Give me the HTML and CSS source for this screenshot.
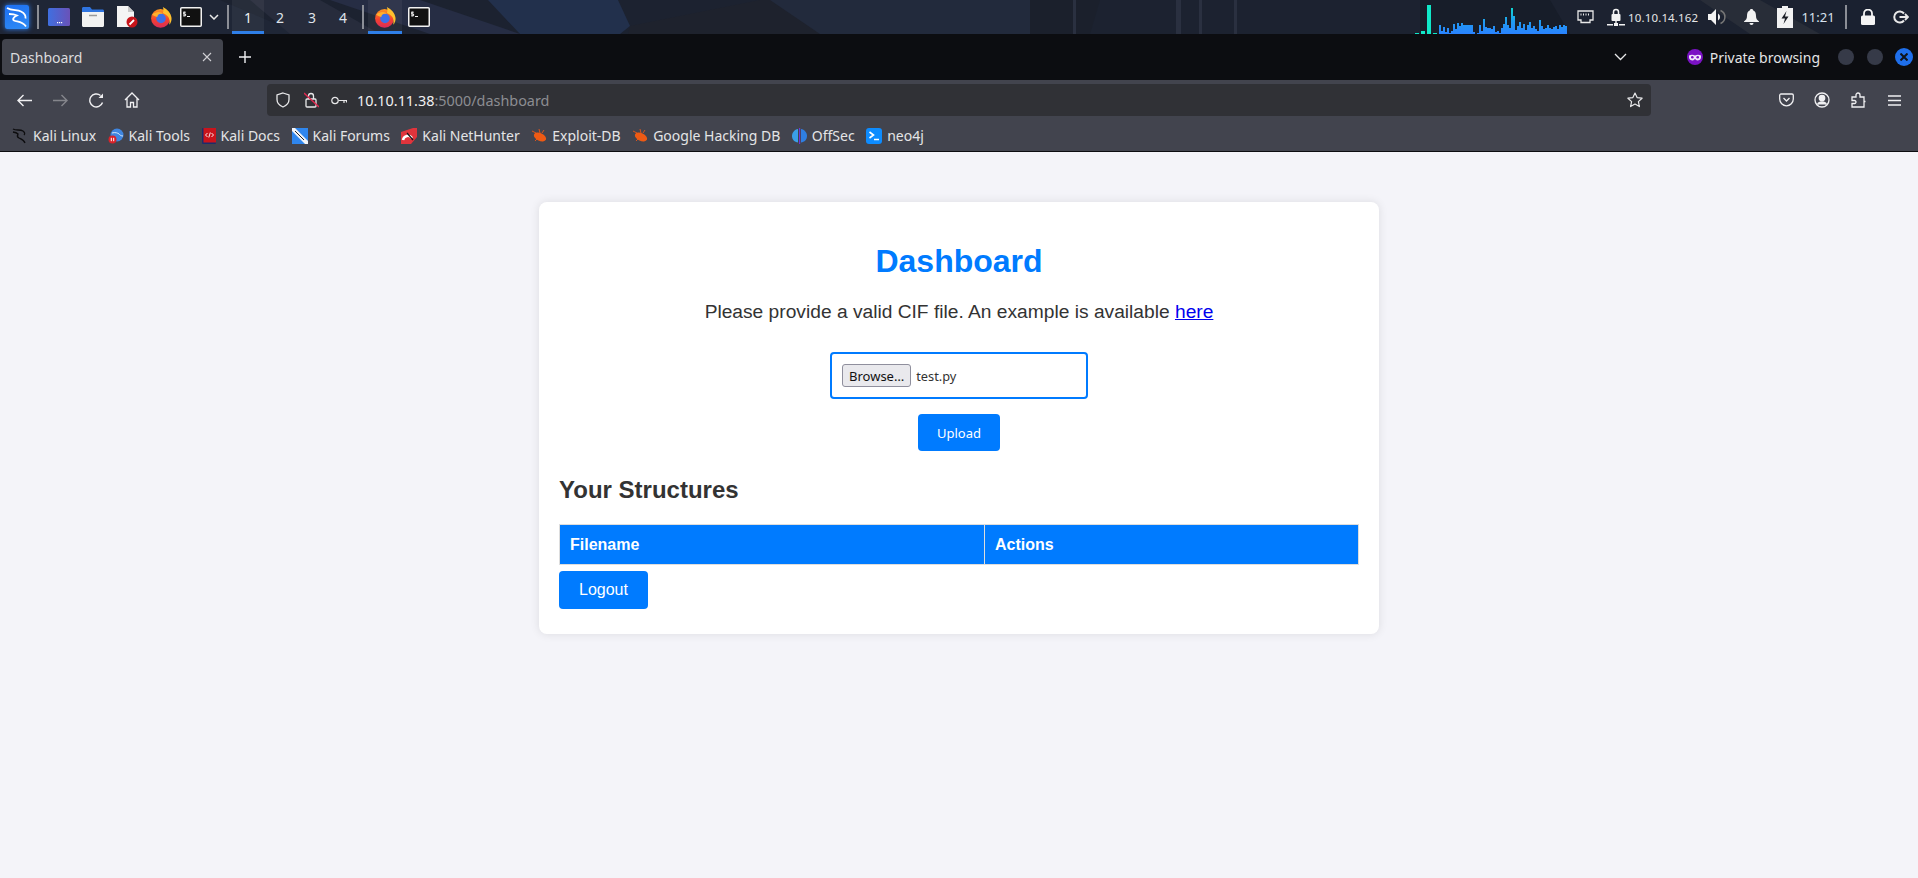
FILE: index.html
```html
<!DOCTYPE html>
<html lang="en">
<head>
    <meta charset="UTF-8">
    <meta name="viewport" content="width=device-width, initial-scale=1.0">
    <title>Dashboard</title>
    <link rel="stylesheet" href="styles.css">
</head>
<body>
    <svg class="defs" width="0" height="0">
        <defs>
            <linearGradient id="ffBody" x1="0" y1="0" x2="0" y2="1">
                <stop offset="0" stop-color="#ff9a1f"/>
                <stop offset="0.55" stop-color="#f5422f"/>
                <stop offset="1" stop-color="#d92b5a"/>
            </linearGradient>
            <linearGradient id="netBars" x1="0" y1="0" x2="0" y2="1">
                <stop offset="0" stop-color="#10d6d0"/>
                <stop offset="0.5" stop-color="#1f9cf0"/>
                <stop offset="1" stop-color="#2a82ff"/>
            </linearGradient>
            <linearGradient id="deskGrad" x1="0" y1="0" x2="1" y2="0">
                <stop offset="0" stop-color="#3f6fe0"/>
                <stop offset="1" stop-color="#6a52b8"/>
            </linearGradient>
            <symbol id="firefox" viewBox="0 0 24 24">
                <circle cx="11.5" cy="13.5" r="10.3" fill="url(#ffBody)"/>
                <path d="M14 1c5 2.500 9 6.500 9.500 12 .2 3-.8 5.500-2.500 7.500 .5-3 .5-6-1-8.500-1.500-2.500-4-3.500-6-4.500 1-2 .8-4.500 0-6.500z" fill="#ffc02e"/>
                <circle cx="12" cy="13.500" r="5.200" fill="#3d6fe8"/>
                <path d="M2.500 9c2-1.500 4.500-2.500 7-2.500 2 0 3.500 .8 4.500 2-2-.3-4 0-5 1-.6 .6-1 1.500-1 2.500-2.500-.5-4.500-1.200-5.500-3z" fill="#ffb02e"/>
            </symbol>
            <symbol id="terminal" viewBox="0 0 22 20">
                <rect x=".75" y=".75" width="20.500" height="18.500" rx="1" fill="#111" stroke="#f2f2f2" stroke-width="1.500"/>
                <path d="M4 4.500v5M5.800 5.200h-2v1.800h1.800v1.800h-2M7 9.500h3" fill="none" stroke="#f2f2f2" stroke-width="1"/>
            </symbol>
            <symbol id="bug" viewBox="0 0 16 16">
                <path d="M1 3l4 2M3 8l3 0M4 13l3-3M8 1l1 4M13 2l-2 3" fill="none" stroke="#d9541e" stroke-width="1"/>
                <ellipse cx="9" cy="9" rx="6.500" ry="3.800" transform="rotate(25 9 9)" fill="#ee5a14"/>
            </symbol>
        </defs>
    </svg>

    <header class="desktop-panel">
        <svg class="wallpaper" width="1918" height="34" viewBox="0 0 1918 34">
            <rect width="1918" height="34" fill="#1c2230"/>
            <path d="M0 0h220L300 34H0z" fill="#1f2636"/>
            <path d="M250 0h70l60 34h-90z" fill="#272c3c"/>
            <path d="M330 0h90L520 34h-90z" fill="#262d44"/>
            <path d="M488 0h130l12 26-10 8h-100z" fill="#22304c"/>
            <path d="M630 26L760 0h30l30 34H628z" fill="#1e222d"/>
            <path d="M770 0h260v34H820z" fill="#222a3c"/>
            <path d="M1030 0h70l-10 34h-60z" fill="#1b202c"/>
            <path d="M1073 0h3v34h-3zM1176 0h5v34h-5zM1199 0h3v34h-3zM1234 0h3v34h-3z" fill="#2a3040"/>
            <path d="M1420 0h130l20 34h-150z" fill="#171d29"/>
            <path d="M1700 0h60l60 34h-70z" fill="#282d38"/>
            <path d="M1820 0h98v34h-98z" fill="#1a2130"/>
        </svg>

        <div class="panel-cell kali-cell">
            <span class="kali-logo">
                <svg width="24" height="24" viewBox="0 0 24 24" fill="none" stroke="#fff" stroke-width="1.800">
                    <path d="M2 3c5 3 10 1.500 14 3.500 3 1.500 5 4 4.500 7"/>
                    <path d="M4 9c3 0 6 .5 8 1.500-3 1.500-5 3.500-3 5 3 1.500 8 .5 12 6"/>
                </svg>
            </span>
        </div>
        <div class="panel-cell sep-cell"><span class="panel-sep"></span></div>
        <div class="panel-cell launcher">
            <svg width="22" height="18" viewBox="0 0 22 18">
                <rect width="22" height="18" rx="1.500" fill="url(#deskGrad)"/>
                <path d="M9 14h1.200v1.200H9zM11 14h1.200v1.200H11zM13 14h1.200v1.200H13z" fill="#fff"/>
            </svg>
        </div>
        <div class="panel-cell launcher">
            <svg width="22" height="20" viewBox="0 0 22 20">
                <path d="M0 1.500C0 .6 .6 0 1.500 0H8l2 2.500h10.500c.9 0 1.500 .6 1.500 1.500v2H0z" fill="#2f74e0"/>
                <path d="M0 5h22v13.500c0 .9-.6 1.500-1.500 1.500h-19C.6 20 0 19.400 0 18.500z" fill="#f2f2f2"/>
                <path d="M7 8.500h8" stroke="#9a9a9a" stroke-width="1.500"/>
            </svg>
        </div>
        <div class="panel-cell launcher">
            <svg width="22" height="22" viewBox="0 0 22 22">
                <path d="M1 0h11l6 6v15H1z" fill="#f4f4f4"/>
                <path d="M12 0l6 6h-6z" fill="#c9c9c9"/>
                <circle cx="16" cy="16" r="5.500" fill="#c8151b"/>
                <path d="M13.500 18.500l4.500-4.500" stroke="#fff" stroke-width="1.800"/>
            </svg>
        </div>
        <div class="panel-cell launcher"><svg width="22" height="22"><use href="#firefox"/></svg></div>
        <div class="panel-cell launcher launcher-term"><svg width="22" height="20"><use href="#terminal"/></svg></div>
        <div class="panel-cell launcher-more">
            <svg width="10" height="6" viewBox="0 0 10 6" fill="none" stroke="#e8e8e8" stroke-width="1.500"><path d="M1 1l4 4 4-4"/></svg>
        </div>
        <div class="panel-cell sep-cell"><span class="panel-sep"></span></div>

        <div class="panel-cell workspace is-active">1</div>
        <div class="panel-cell workspace">2</div>
        <div class="panel-cell workspace">3</div>
        <div class="panel-cell workspace workspace-last">4</div>
        <div class="panel-cell sep-cell sep-wide"><span class="panel-sep"></span></div>

        <div class="panel-cell task is-active"><svg width="22" height="22"><use href="#firefox"/></svg></div>
        <div class="panel-cell task"><svg width="22" height="20"><use href="#terminal"/></svg></div>

        <div class="panel-right">
            <svg class="netgraph" width="152" height="29" viewBox="0 0 152 29">
                <path d="M0 28h4v1H0zM6 26h4v3H6zM12 0h4v29h-4zM18 28h4v1h-4z" fill="#10e8c8"/>
                <path transform="translate(24 3)" fill="url(#netBars)" d="M0 26V17h2V23h2V19h2V24h2V20h2V25h2V23h2V16h2V21h2V15h2V18h2V15h2V17h10V24h2V26h2V25h2V17h2V23h2V11h2V19h2V20h4V21h2V18h2V24h2V23h2V25h2V20h2V16h2V9h2V17h2V20h2V0h2V8h2V22h2V18h2V14h2V20h2V16h2V22h2V17h2V14h2V20h2V18h2V21h2V23h2V12h2V18h2V21h2V20h2V17h2V20h2V21h2V19h2V18h2V21h2V17h2V19h2V17h2V18h2V17h2V26z"/>
            </svg>
            <div class="panel-cell tray-net">
                <svg width="17" height="14" viewBox="0 0 17 14" fill="none" stroke="#e8e8e8" stroke-width="1.300"><path d="M1 1h15v9h-3v2.500H4V10H1z"/><path d="M4 3.500v2M6.500 3.500v2M9 3.500v2M11.500 3.500v2" stroke-width="1"/></svg>
            </div>
            <div class="panel-cell tray-vpn">
                <svg width="18" height="19" viewBox="0 0 18 19" fill="#f2f2f2">
                    <rect x="4.500" y="6" width="9" height="7" rx="1"/>
                    <path d="M6.500 6V4a2.500 2.500 0 0 1 5 0v2" fill="none" stroke="#f2f2f2" stroke-width="1.500"/>
                    <path d="M8.300 13h1.400v2H8.300zM0 16h6v1.500H0zM7 15h4v3H7zM12 16h6v1.500h-6z"/>
                </svg>
            </div>
            <div class="panel-cell tray-ip">10.10.14.162</div>
            <div class="panel-cell tray-icon">
                <svg width="18" height="16" viewBox="0 0 18 16">
                    <path d="M0 5h3l5-5v16l-5-5H0z" fill="#f2f2f2"/>
                    <path d="M10 4.500a4 4 0 0 1 0 7z" fill="#f2f2f2"/>
                    <path d="M12.500 1.500a7 7 0 0 1 0 13" fill="none" stroke="#777" stroke-width="1.500"/>
                </svg>
            </div>
            <div class="panel-cell tray-bell">
                <svg width="15" height="16" viewBox="0 0 15 16" fill="#f2f2f2"><path d="M7.500 0c1 0 1.500 .5 1.500 1.200C11.500 2 12 4.500 12 7c0 2.500 1 4 3 5.500v.5H0v-.5C2 11 3 9.500 3 7c0-2.500 .5-5 3-5.800C6 .5 6.500 0 7.500 0z"/><path d="M5.500 14h4a2 2 0 0 1-4 0z"/></svg>
            </div>
            <div class="panel-cell tray-icon">
                <svg width="16" height="22" viewBox="0 0 16 22">
                    <path d="M5 0h6v2h5v20H0V2h5z" fill="#f2f2f2"/>
                    <path d="M9.500 5L4.500 12.500H8L6.500 18l5-7.500H8z" fill="#1b1e26"/>
                </svg>
            </div>
            <div class="panel-cell tray-time">11:21</div>
            <div class="panel-cell tray-sep"><span class="panel-sep"></span></div>
            <div class="panel-cell tray-lock">
                <svg width="14" height="16" viewBox="0 0 14 16" fill="#f4f4f4"><rect y="6.500" width="14" height="9.500" rx="1.500"/><path d="M3 7V4.500a4 4 0 0 1 8 0V7" fill="none" stroke="#f4f4f4" stroke-width="1.800"/></svg>
            </div>
            <div class="panel-cell tray-power">
                <svg width="16" height="14" viewBox="0 0 16 14" fill="none" stroke="#e8e8e8" stroke-width="2"><path d="M11 3.500A5.500 5.500 0 1 0 11 10.500"/><path d="M6.500 7H15M12 4l3 3-3 3" stroke-width="1.800"/></svg>
            </div>
        </div>
    </header>

    <div class="tabbar">
        <div class="tab">
            <span class="tab-title">Dashboard</span>
            <svg width="10" height="10" viewBox="0 0 10 10" stroke="#d0d0d4" stroke-width="1.100"><path d="M1 1l8 8M9 1l-8 8"/></svg>
        </div>
        <div class="newtab">
            <svg width="12" height="12" viewBox="0 0 12 12" stroke="#f0f0f2" stroke-width="1.400"><path d="M6 0v12M0 6h12"/></svg>
        </div>
        <div class="tabbar-right">
            <svg class="tabs-menu" width="13" height="8" viewBox="0 0 13 8" fill="none" stroke="#e8e8ea" stroke-width="1.300"><path d="M1 1l5.500 5.500L12 1"/></svg>
            <svg class="private-icon" width="16" height="16" viewBox="0 0 16 16">
                <circle cx="8" cy="8" r="8" fill="#7b12c4"/>
                <path d="M2 6.500c2-1 4-1 6 0 2-1 4-1 6 0v2c0 2-2 3-3.500 3-1.500 0-2-1.500-2.500-1.500s-1 1.500-2.500 1.500C4 11.500 2 10.500 2 8.500z" fill="#f0e6fa"/>
                <circle cx="5.300" cy="8.300" r="1.300" fill="#7b12c4"/>
                <circle cx="10.700" cy="8.300" r="1.300" fill="#7b12c4"/>
            </svg>
            <span class="private-label">Private browsing</span>
            <span class="win-btn"></span>
            <span class="win-btn"></span>
            <span class="win-btn win-close">
                <svg width="8" height="8" viewBox="0 0 8 8" stroke="#10131a" stroke-width="2"><path d="M.5 .5l7 7M7.500 .5l-7 7"/></svg>
            </span>
        </div>
    </div>

    <nav class="navbar">
        <div class="nav-btn">
            <svg width="15" height="13" viewBox="0 0 15 13" fill="none" stroke="#f0f0f2" stroke-width="1.400"><path d="M15 6.500H1M6.500 1L1 6.500 6.500 12"/></svg>
        </div>
        <div class="nav-btn">
            <svg width="15" height="13" viewBox="0 0 15 13" fill="none" stroke="#85868c" stroke-width="1.400"><path d="M0 6.500h14M8.500 1L14 6.500 8.500 12"/></svg>
        </div>
        <div class="nav-btn">
            <svg width="15" height="15" viewBox="0 0 15 15" fill="none" stroke="#f0f0f2" stroke-width="1.400"><path d="M13.500 9.500A6.500 6.500 0 1 1 11.500 2.500"/><path d="M14 .5V5H9.500z" fill="#f0f0f2" stroke="none"/></svg>
        </div>
        <div class="nav-btn">
            <svg width="16" height="16" viewBox="0 0 16 16" fill="none" stroke="#f0f0f2" stroke-width="1.300"><path d="M1 8l7-7 7 7M3 6.500V15h3.500v-4.500h3V15H13V6.500"/></svg>
        </div>

        <div class="urlbar">
            <div class="url-icon">
                <svg width="14" height="16" viewBox="0 0 14 16" fill="none" stroke="#e8e8ea" stroke-width="1.300"><path d="M7 1l6 2v4.500c0 3.500-2.500 6-6 7.500-3.500-1.500-6-4-6-7.500V3z"/></svg>
            </div>
            <div class="url-icon">
                <svg width="15" height="16" viewBox="0 0 15 16" fill="none"><rect x="2" y="7" width="10" height="8" rx="1" stroke="#e8e8ea" stroke-width="1.300"/><path d="M4.500 7V4a2.500 2.500 0 0 1 5 0v3" stroke="#e8e8ea" stroke-width="1.300"/><path d="M0 1l15 14" stroke="#e22850" stroke-width="1.300"/></svg>
            </div>
            <div class="url-icon">
                <svg width="16" height="9" viewBox="0 0 16 9" fill="none" stroke="#e8e8ea" stroke-width="1.200"><circle cx="4" cy="4.500" r="3.200"/><path d="M7.500 4.500H16M13 4.500V7M15.500 4.500V6.500"/></svg>
            </div>
            <span class="url-text">10.10.11.38<span class="url-dim">:5000/dashboard</span></span>
            <div class="url-icon url-star">
                <svg width="16" height="16" viewBox="0 0 16 16" fill="none" stroke="#e8e8ea" stroke-width="1.200" stroke-linejoin="round"><path d="M8 1l2.100 4.600 5 .6-3.700 3.400 1 5L8 12.100 3.600 14.600l1-5L.9 6.200l5-.6z"/></svg>
            </div>
        </div>

        <div class="nav-tools">
            <div class="nav-btn">
                <svg width="15" height="14" viewBox="0 0 15 14" fill="none" stroke="#f0f0f2" stroke-width="1.300"><path d="M2 1h11a1.300 1.300 0 0 1 1.300 1.300V6a6.800 6.800 0 0 1-13.600 0V2.300A1.300 1.300 0 0 1 2 1z"/><path d="M4.500 5l3 3 3-3"/></svg>
            </div>
            <div class="nav-btn">
                <svg width="16" height="16" viewBox="0 0 16 16" fill="none" stroke="#f0f0f2" stroke-width="1.300"><circle cx="8" cy="8" r="7"/><circle cx="8" cy="6" r="2.700" fill="#f0f0f2"/><path d="M3.500 12.500c1-2 2.500-2.500 4.500-2.500s3.500 .5 4.500 2.500" fill="#f0f0f2"/></svg>
            </div>
            <div class="nav-btn">
                <svg width="15" height="16" viewBox="0 0 15 16" fill="none" stroke="#f0f0f2" stroke-width="1.300"><path d="M1 5h4V3a2 2 0 0 1 4 0v2h4v4.500h1.500v0H13V15H1v-3.500h2.500a1.500 1.500 0 0 0 0-3H1z"/></svg>
            </div>
            <div class="nav-btn">
                <svg width="13" height="11" viewBox="0 0 13 11" stroke="#f0f0f2" stroke-width="1.300"><path d="M0 1h13M0 5.500h13M0 10h13"/></svg>
            </div>
        </div>
    </nav>

    <div class="bookmarks">
        <a class="bookmark">
            <svg width="16" height="16" viewBox="0 0 16 16" fill="none" stroke="#0d0d0f" stroke-width="1.300"><path d="M1 1c3 2 7 0 10 2 2 1.500 2 3 1 4"/><path d="M1 4c3 .5 4 1 5 2-1 2-1 3 1 4 2 1 5 2 6 5"/></svg>
            Kali Linux
        </a>
        <a class="bookmark">
            <svg width="16" height="16" viewBox="0 0 16 16">
                <circle cx="9" cy="7" r="6.500" fill="#3f86e0"/>
                <path d="M4 5c3-1 6 0 7 1 1 1 2 2 4 2" fill="none" stroke="#d6e8fb" stroke-width="1"/>
                <circle cx="4.500" cy="11.500" r="4" fill="#d8232a"/>
                <path d="M3.300 9.800v3.400M5.700 9.800v3.400" stroke="#fff" stroke-width="1"/>
            </svg>
            Kali Tools
        </a>
        <a class="bookmark">
            <svg width="14" height="16" viewBox="0 0 14 16">
                <rect x="0" width="14" height="16" rx="1" fill="#1c2d6b"/>
                <rect x="1.500" width="12.500" height="14.500" fill="#c9141c"/>
                <path d="M5.500 5L3.500 7l2 2M9.500 5l2 2-2 2M8.300 4.500L6.800 9.500" fill="none" stroke="#fff" stroke-width=".9"/>
            </svg>
            Kali Docs
        </a>
        <a class="bookmark">
            <svg width="16" height="16" viewBox="0 0 16 16">
                <rect width="16" height="16" fill="#2f86ee"/>
                <path d="M0 0h3l13 13v3h-3L0 3z" fill="#f2f4f8"/>
                <path d="M3 3l9 9" stroke="#222" stroke-width="1"/>
            </svg>
            Kali Forums
        </a>
        <a class="bookmark">
            <svg width="16" height="16" viewBox="0 0 16 16">
                <path d="M0 4l12-4h4v9l-6 7H0z" fill="#e0343c"/>
                <path d="M2 12a5 5 0 0 1 9-2" fill="none" stroke="#fff" stroke-width="2.500"/>
                <path d="M6 5l6 7" stroke="#15151a" stroke-width="1.200"/>
            </svg>
            Kali NetHunter
        </a>
        <a class="bookmark"><svg width="16" height="16"><use href="#bug"/></svg>Exploit-DB</a>
        <a class="bookmark"><svg width="16" height="16"><use href="#bug"/></svg>Google Hacking DB</a>
        <a class="bookmark">
            <svg width="15" height="16" viewBox="0 0 15 16">
                <path d="M6 1C2.500 1.500 0 4.500 0 8s2.500 6 6 6.500z" fill="#3aa0e8"/>
                <path d="M9 1c3.500 .5 6 3.500 6 7s-2.500 6-6 6.500z" fill="#2f7fe0"/>
                <path d="M7 0h1.200v16H7z" fill="#6a38d8"/>
            </svg>
            OffSec
        </a>
        <a class="bookmark">
            <svg width="16" height="16" viewBox="0 0 16 16">
                <rect width="16" height="16" rx="3" fill="#0d8cff"/>
                <path d="M3.500 4l4 3-4 3" fill="none" stroke="#fff" stroke-width="1.600"/>
                <path d="M8 11.500h5" stroke="#fff" stroke-width="1.500"/>
            </svg>
            neo4j
        </a>
    </div>

    <main class="page">
        <div class="container">
            <h1>Dashboard</h1>
            <p class="intro">Please provide a valid CIF file. An example is available <a href="#">here</a></p>

            <form class="upload-form">
                <div class="file-input">
                    <button type="button" class="browse-btn">Browse…</button>
                    <span class="file-name">test.py</span>
                </div>
                <button type="button" class="btn-upload">Upload</button>
            </form>

            <h2>Your Structures</h2>
            <table>
                <thead>
                    <tr>
                        <th class="col-name">Filename</th>
                        <th>Actions</th>
                    </tr>
                </thead>
            </table>
            <a href="#" class="btn-logout">Logout</a>
        </div>
    </main>
</body>
</html>
```

FILE: styles.css
```css
* {
    box-sizing: border-box;
}
html, body {
    height: 100%;
}
body {
    margin: 0;
    display: flex;
    flex-direction: column;
    overflow: hidden;
    font-family: "Noto Sans", sans-serif;
    background: #f4f4f9;
}
svg {
    display: block;
    flex: none;
}
.defs {
    position: absolute;
}

/* desktop panel */
.desktop-panel {
    position: relative;
    display: flex;
    height: 34px;
    flex: none;
    color: #e8e8ea;
}
.wallpaper {
    position: absolute;
    top: 0;
    left: 0;
}
.panel-cell {
    position: relative;
    display: flex;
    align-items: center;
    justify-content: center;
    height: 34px;
    flex: none;
}
.kali-cell {
    width: 34px;
}
.kali-logo {
    display: flex;
    width: 24px;
    height: 24px;
    background: linear-gradient(160deg, #1d6ff2, #2f8cf5);
    border-radius: 2px;
    box-shadow: 0 0 5px #2f7ff0;
}
.sep-cell {
    width: 8px;
}
.sep-wide {
    width: 10px;
}
.panel-sep {
    display: block;
    width: 2px;
    height: 24px;
    background: #8b8e96;
}
.launcher {
    width: 34px;
}
.launcher-term {
    width: 26px;
}
.launcher-more {
    width: 20px;
}
.workspace {
    width: 32px;
    font-size: 14px;
    color: #dfe3ea;
}
.workspace-last {
    width: 30px;
}
.workspace.is-active {
    background: rgba(255, 255, 255, 0.05);
    color: #f0f0f2;
}
.is-active::after {
    content: "";
    position: absolute;
    left: 0;
    right: 0;
    bottom: 0;
    height: 3px;
    background: #2f7fe8;
}
.task {
    width: 34px;
}
.task.is-active {
    background: rgba(255, 255, 255, 0.05);
}
.panel-right {
    position: relative;
    display: flex;
    margin-left: auto;
}
.netgraph {
    align-self: flex-end;
    margin-right: 3px;
}
.tray-net {
    width: 30px;
}
.tray-vpn {
    width: 28px;
    padding-left: 4px;
}
.tray-icon {
    width: 26px;
}
.tray-ip {
    width: 76px;
    justify-content: flex-start;
    font-size: 11.5px;
    letter-spacing: 0.15px;
    color: #e6e6e6;
}
.tray-bell {
    width: 42px;
}
.tray-time {
    width: 40px;
    font-size: 13px;
    color: #d8e2ee;
}
.tray-sep {
    width: 13px;
    padding-left: 3px;
}
.tray-lock {
    width: 33px;
}
.tray-power {
    width: 34px;
}

/* firefox chrome */
.tabbar {
    display: flex;
    align-items: center;
    height: 46px;
    flex: none;
    padding: 0 5px 0 2px;
    background: #0c0d11;
}
.tab {
    display: flex;
    align-items: center;
    justify-content: space-between;
    width: 221px;
    height: 36px;
    padding: 0 11px 0 8px;
    background: #42444d;
    border-radius: 4px;
}
.tab-title {
    font-size: 14px;
    color: #dcdcde;
}
.newtab {
    display: flex;
    justify-content: center;
    width: 44px;
}
.tabbar-right {
    display: flex;
    align-items: center;
    margin-left: auto;
}
.tabs-menu {
    margin-right: 60px;
}
.private-label {
    margin: 0 18px 0 7px;
    font-size: 14px;
    color: #e4e4e6;
}
.win-btn {
    display: flex;
    align-items: center;
    justify-content: center;
    width: 16px;
    height: 16px;
    margin-right: 13px;
    background: #363a48;
    border-radius: 50%;
}
.win-close {
    width: 18px;
    height: 18px;
    margin: 0 0 0 -1px;
    background: #1f6feb;
}
.navbar {
    display: flex;
    height: 36px;
    flex: none;
    align-items: flex-end;
    padding-left: 6px;
    background: #42444e;
}
.nav-btn {
    display: flex;
    align-items: center;
    justify-content: center;
    width: 36px;
    height: 32px;
}
.urlbar {
    display: flex;
    align-items: center;
    width: 1384px;
    height: 32px;
    margin-left: 117px;
    padding: 0 2px;
    background: #303136;
    border-radius: 4px;
}
.url-icon {
    display: flex;
    justify-content: center;
    width: 28px;
}
.url-text {
    margin-left: 4px;
    font-size: 14.4px;
    color: #f0f0f2;
}
.url-dim {
    color: #8c8d92;
}
.url-star {
    margin-left: auto;
}
.nav-tools {
    display: flex;
    margin-left: auto;
    padding-right: 6px;
}
.bookmarks {
    display: flex;
    align-items: center;
    gap: 11.5px;
    height: 36px;
    flex: none;
    padding: 4px 0 0 12px;
    background: #42444e;
    border-bottom: 1px solid #0c0d11;
}
.bookmark {
    display: flex;
    align-items: center;
    gap: 5px;
    font-size: 14px;
    color: #e4e4e6;
}

/* page */
.page {
    flex: 1;
    font-family: "Liberation Sans", Arial, sans-serif;
    background: #f4f4f9;
}
.container {
    width: 840px;
    margin: 50px auto 0;
    padding: 20px;
    background: white;
    border-radius: 8px;
    box-shadow: 0 0 10px rgba(0, 0, 0, 0.1);
    color: #333;
}
h1 {
    margin: 21px 0 21px;
    font-size: 32px;
    text-align: center;
    color: #007bff;
}
.intro {
    margin: 0 0 29px;
    font-size: 19.2px;
    text-align: center;
}
.intro a {
    color: #0000ee;
}
.upload-form {
    display: flex;
    flex-direction: column;
    align-items: center;
}
.file-input {
    display: flex;
    align-items: center;
    width: 258px;
    height: 47px;
    padding: 0 10px;
    background: white;
    border: 2px solid #007bff;
    border-radius: 4px;
}
.browse-btn {
    height: 23px;
    padding: 0 6px;
    font-family: "Noto Sans", sans-serif;
    font-size: 13px;
    color: #111;
    background: #e9e9ed;
    border: 1px solid #8f8f9d;
    border-radius: 3px;
}
.file-name {
    margin-left: 5px;
    font-family: "Noto Sans", sans-serif;
    font-size: 12.8px;
    color: #333;
}
.btn-upload {
    width: 82px;
    height: 37px;
    margin-top: 15px;
    padding: 0;
    font-family: "Noto Sans", sans-serif;
    font-size: 13px;
    color: white;
    background: #007bff;
    border: none;
    border-radius: 4px;
}
h2 {
    margin: 25px 0 20px;
    font-size: 24px;
    color: #333;
}
table {
    width: 800px;
    table-layout: fixed;
    border-collapse: collapse;
}
th {
    height: 40px;
    padding: 10px;
    font-size: 16px;
    text-align: left;
    color: white;
    background: #007bff;
    border: 1px solid #ddd;
}
.col-name {
    width: 425px;
}
.btn-logout {
    display: inline-block;
    margin: 6px 0 5px;
    padding: 10px 20px;
    font-size: 16px;
    color: white;
    text-decoration: none;
    background: #007bff;
    border-radius: 4px;
}
```
